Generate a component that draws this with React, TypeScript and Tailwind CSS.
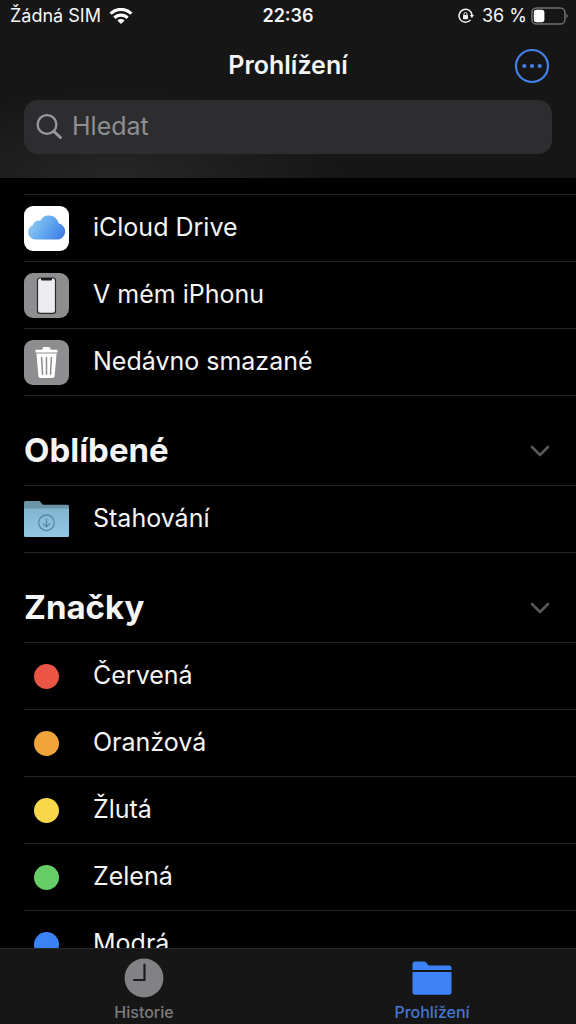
import type { ReactNode } from "react";

type Row = { label: string; icon: ReactNode };

function WifiIcon() {
  return (
    <svg className="h-4 w-6" viewBox="0 0 24 16" fill="none" stroke="#fff" strokeWidth="3.2">
      <path d="M1.6 5.7a14.7 14.7 0 0 1 20.8 0" />
      <path d="M5.4 9.8a9.3 9.3 0 0 1 13.2 0" />
      <path d="M12 16l-3.6-3.500a5.1 5.1 0 0 1 7.2 0z" fill="#fff" stroke="none" />
    </svg>
  );
}

function RotationLockIcon() {
  return (
    <svg className="h-4 w-4" viewBox="0 0 16 16" fill="none" stroke="#f2f2f2">
      <path d="M12.6 11.9A6.5 6.5 0 1 1 14 7" strokeWidth="1.5" />
      <path d="M11.8 7H16l-2.1 3z" fill="#f2f2f2" stroke="none" />
      <rect x="5" y="7" width="5" height="4.2" rx="0.6" fill="#f2f2f2" stroke="none" />
      <path d="M6 7.2V6a1.5 1.5 0 0 1 3 0v1.2" strokeWidth="1" />
    </svg>
  );
}

function BatteryIcon() {
  return (
    <svg className="h-[18px] w-[37px]" viewBox="0 0 37 18" fill="none">
      <rect x="0.9" y="0.9" width="33" height="16.2" rx="4.6" stroke="#6f6f70" strokeWidth="1.5" />
      <rect x="2.8" y="2.8" width="10.6" height="12.4" rx="2.6" fill="#fff" />
      <path d="M35.4 6.5a3 3 0 0 1 0 5z" fill="#6f6f70" />
    </svg>
  );
}

function MoreIcon() {
  return (
    <svg className="h-9 w-9" viewBox="0 0 36 36" fill="#4480e8">
      <circle cx="18" cy="18" r="16" fill="none" stroke="#4480e8" strokeWidth="2.2" />
      <circle cx="10.3" cy="18" r="2.1" />
      <circle cx="18" cy="18" r="2.1" />
      <circle cx="25.7" cy="18" r="2.1" />
    </svg>
  );
}

function SearchIcon() {
  return (
    <svg className="h-7 w-7 shrink-0" viewBox="0 0 28 28" fill="none" stroke="#98989d">
      <circle cx="11" cy="11.500" r="9.4" strokeWidth="2.3" />
      <path d="M17.8 18.3l6.600 6.200" strokeWidth="3" strokeLinecap="round" />
    </svg>
  );
}

function CloudIcon() {
  return (
    <svg className="h-[45px] w-[45px]" viewBox="0 0 45 45">
      <defs>
        <linearGradient id="cloud" x1="0" y1="0.3" x2="1" y2="0.7">
          <stop offset="0" stopColor="#93ccf4" />
          <stop offset="0.5" stopColor="#62a9ef" />
          <stop offset="1" stopColor="#3f7ee6" />
        </linearGradient>
      </defs>
      <rect width="45" height="45" rx="9" fill="#fff" />
      <path
        d="M11.5 33.6a7.6 7.6 0 0 1-7.4-7.5c0-3.2 1.9-5.8 4.7-6.9a5.6 5.6 0 0 1 7.6-4.4 9.2 9.2 0 0 1 8.7-5.4c4.8 0 8.6 3.3 9.5 7.9a8.3 8.3 0 0 1 6.5 8.1c0 4.6-3.6 8.2-8.1 8.2z"
        fill="url(#cloud)"
      />
    </svg>
  );
}

function PhoneIcon() {
  return (
    <svg className="h-[45px] w-[45px]" viewBox="0 0 45 45">
      <rect width="45" height="45" rx="9" fill="#8e8e90" />
      <rect x="13.5" y="5" width="18" height="35.4" rx="2.6" fill="#ececf1" stroke="#29292b" strokeWidth="1.2" />
      <path d="M17 5h11v1.2a1.2 1.2 0 0 1-1.2 1.2h-8.6A1.2 1.2 0 0 1 17 6.2z" fill="#1c1c1e" />
    </svg>
  );
}

function TrashIcon() {
  return (
    <svg className="h-[45px] w-[45px]" viewBox="0 0 45 45" fill="#fff">
      <rect width="45" height="45" rx="9" fill="#8e8e90" />
      <path d="M11.6 9.8h6.6l.8-2.2c.2-.4.5-.6.9-.6h5.2c.4 0 .7.2.9.6l.8 2.2h6.6v2.6H11.6z" />
      <path d="M12.4 13.6h20.2l-2 22.6a2 2 0 0 1-2 1.8H16.4a2 2 0 0 1-2-1.8z" />
      <path
        d="M17.6 17.4l.9 16.8M22.5 17.4v16.8M27.4 17.4l-.9 16.8"
        stroke="#8e8e90"
        strokeWidth="1.5"
        strokeLinecap="round"
      />
    </svg>
  );
}

function DownloadsIcon() {
  return (
    <svg className="h-9 w-[45px]" viewBox="0 0 45 36" fill="none">
      <defs>
        <linearGradient id="folder" x1="0" y1="0" x2="0" y2="1">
          <stop offset="0" stopColor="#83b4cf" />
          <stop offset="1" stopColor="#92c8e5" />
        </linearGradient>
      </defs>
      <path
        d="M0 1.5A1.5 1.5 0 0 1 1.5 0H14.5c1 0 1.6.4 2.2 1.2l1.4 1.8c.3.5.8.7 1.4.7H43.5A1.5 1.5 0 0 1 45 5.2V20H0z"
        fill="#6d95aa"
      />
      <path d="M0 7.5h45v27a1.5 1.5 0 0 1-1.5 1.5h-42A1.5 1.5 0 0 1 0 34.5z" fill="url(#folder)" />
      <circle cx="22.5" cy="21.8" r="7.8" stroke="#5489a5" strokeWidth="1.3" />
      <path d="M22.5 17.4v8.2M19.2 22.6l3.3 3.2 3.3-3.2" stroke="#5489a5" strokeWidth="1.3" />
    </svg>
  );
}

function ClockIcon() {
  return (
    <svg className="h-10 w-10" viewBox="0 0 40 40" fill="none">
      <circle cx="20" cy="20" r="19.4" fill="#828284" />
      <path d="M20.5 6.5v15.5H10" stroke="#1c1c1e" strokeWidth="2.2" strokeLinecap="round" />
    </svg>
  );
}

function FolderIcon() {
  return (
    <svg className="h-10 w-10" viewBox="0 0 40 40" fill="#3d82f6">
      <path d="M.5 12V6.2A2.7 2.7 0 0 1 3.2 3.5h8.6c1 0 1.7.3 2.3 1l1.6 2c.5.6 1 .9 1.8.9h19.3a2.7 2.7 0 0 1 2.7 2.7V12z" />
      <path d="M.5 14h39v20a2.7 2.7 0 0 1-2.7 2.7H3.2A2.7 2.7 0 0 1 .5 34z" />
    </svg>
  );
}

const locations: Row[] = [
  { label: "iCloud Drive", icon: <CloudIcon /> },
  { label: "V mém iPhonu", icon: <PhoneIcon /> },
  { label: "Nedávno smazané", icon: <TrashIcon /> },
];

const favourites: Row[] = [{ label: "Stahování", icon: <DownloadsIcon /> }];

const tags: Row[] = [
  { label: "Červená", icon: <span className="h-[25px] w-[25px] rounded-full bg-[#eb5545]" /> },
  { label: "Oranžová", icon: <span className="h-[25px] w-[25px] rounded-full bg-[#f1a33c]" /> },
  { label: "Žlutá", icon: <span className="h-[25px] w-[25px] rounded-full bg-[#f8d84a]" /> },
  { label: "Zelená", icon: <span className="h-[25px] w-[25px] rounded-full bg-[#67ce67]" /> },
  { label: "Modrá", icon: <span className="h-[25px] w-[25px] rounded-full bg-[#3b82f6]" /> },
];

function RowList({ rows }: { rows: Row[] }) {
  return (
    <ul className="ml-6">
      {rows.map((row) => (
        <li key={row.label} className="h-[67px] border-b border-[#262628]">
          <a href="#" className="flex h-full items-center gap-6 text-[25px]">
            <span className="flex w-[45px] shrink-0 justify-center">{row.icon}</span>
            {row.label}
          </a>
        </li>
      ))}
    </ul>
  );
}

function Section({ title, rows }: { title: string; rows: Row[] }) {
  return (
    <section>
      <div className="ml-6 flex h-[90px] items-center justify-between border-b border-[#262628] pt-5 pr-6">
        <h2 className="text-[33px] font-bold">{title}</h2>
        <button type="button" aria-label={title}>
          <svg className="h-6 w-6" viewBox="0 0 24 24" fill="none" stroke="#58585b" strokeWidth="2.6">
            <path d="M4 8l8 8 8-8" strokeLinecap="round" strokeLinejoin="round" />
          </svg>
        </button>
      </div>
      <RowList rows={rows} />
    </section>
  );
}

export default function App() {
  return (
    <div className="flex h-screen flex-col overflow-hidden bg-black font-['Inter','Liberation_Sans',sans-serif] text-[#f5f5f5]">
      <header className="bg-[#161617] bg-[radial-gradient(ellipse_40%_50%_at_20%_100%,#262627,#161617)] pb-6">
        <div className="grid h-8 grid-cols-3 items-center px-2 text-lg">
          <div className="flex items-center gap-2 pl-0.5 whitespace-nowrap">
            Žádná SIM
            <WifiIcon />
          </div>
          <time className="text-center font-semibold">22:36</time>
          <div className="flex items-center justify-end gap-1 whitespace-nowrap">
            <RotationLockIcon />
            <span className="pl-1">36 %</span>
            <BatteryIcon />
          </div>
        </div>
        <div className="grid h-[68px] grid-cols-[1fr_auto_1fr] items-center px-[26px]">
          <h1 className="col-start-2 text-[25px] font-semibold">Prohlížení</h1>
          <button type="button" aria-label="Více" className="justify-self-end">
            <MoreIcon />
          </button>
        </div>
        <label className="mx-6 flex h-[54px] items-center gap-2 rounded-[14px] bg-[#2d2d2f] px-3">
          <SearchIcon />
          <input
            type="search"
            aria-label="Hledat"
            placeholder="Hledat"
            className="min-w-0 flex-1 bg-transparent text-[25px] outline-none placeholder:text-[#8e8e93]"
          />
        </label>
      </header>

      <main className="min-h-0 flex-1 overflow-hidden">
        <div className="ml-6 h-[17px] border-b border-[#262628]" />
        <RowList rows={locations} />
        <Section title="Oblíbené" rows={favourites} />
        <Section title="Značky" rows={tags} />
      </main>

      <nav className="grid h-[76px] grid-cols-2 border-t border-[#2a2a2c] bg-[#161617] text-base font-medium">
        <a href="#" className="flex flex-col items-center gap-0.5 pt-[9px] text-[#7c7c7e]">
          <ClockIcon />
          Historie
        </a>
        <a href="#" className="flex flex-col items-center gap-0.5 pt-[9px] text-[#4678cc]">
          <FolderIcon />
          Prohlížení
        </a>
      </nav>
    </div>
  );
}
